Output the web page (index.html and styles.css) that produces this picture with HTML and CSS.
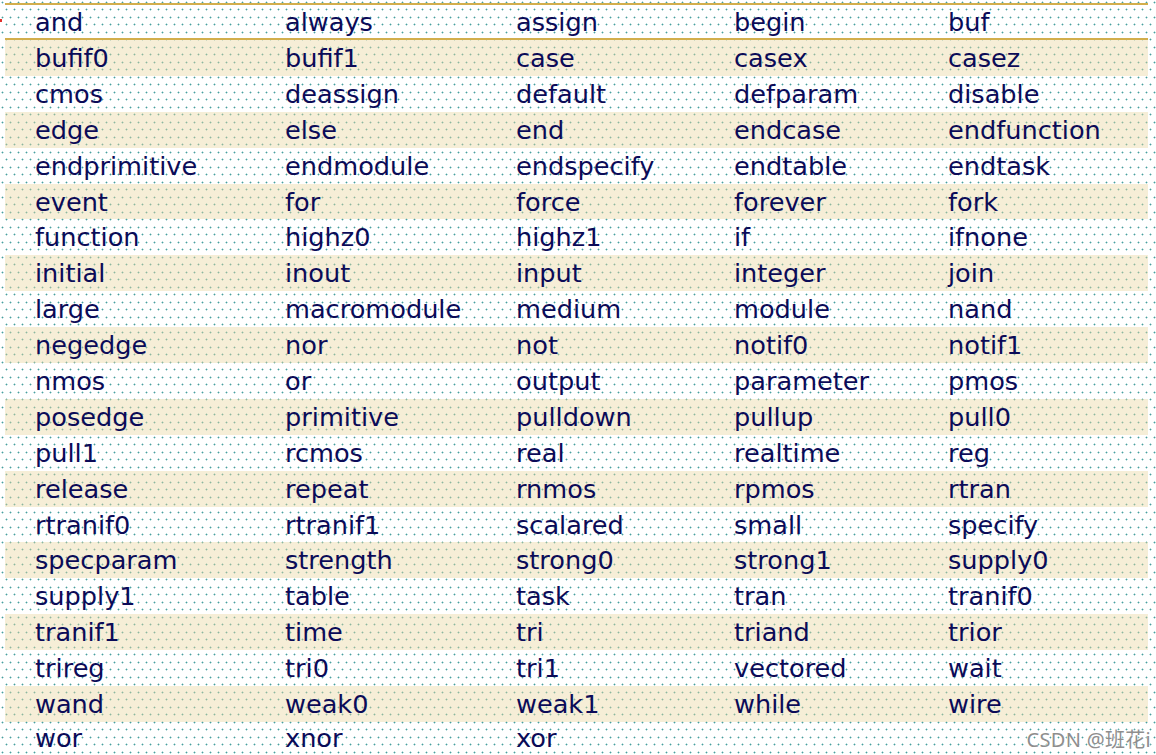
FILE: index.html
```html
<!DOCTYPE html>
<html lang="en">
<head>
<meta charset="utf-8">
<title>Verilog keywords</title>
<link rel="stylesheet" href="styles.css">
</head>
<body>
<div class="page">
  <span class="mark"></span>
  <table class="kw">
    <tbody>
      <tr class="head"><td>and</td><td>always</td><td>assign</td><td>begin</td><td>buf</td></tr>
      <tr><td>bufif0</td><td>bufif1</td><td>case</td><td>casex</td><td>casez</td></tr>
      <tr><td>cmos</td><td>deassign</td><td>default</td><td>defparam</td><td>disable</td></tr>
      <tr><td>edge</td><td>else</td><td>end</td><td>endcase</td><td>endfunction</td></tr>
      <tr><td>endprimitive</td><td>endmodule</td><td>endspecify</td><td>endtable</td><td>endtask</td></tr>
      <tr><td>event</td><td>for</td><td>force</td><td>forever</td><td>fork</td></tr>
      <tr><td>function</td><td>highz0</td><td>highz1</td><td>if</td><td>ifnone</td></tr>
      <tr><td>initial</td><td>inout</td><td>input</td><td>integer</td><td>join</td></tr>
      <tr><td>large</td><td>macromodule</td><td>medium</td><td>module</td><td>nand</td></tr>
      <tr><td>negedge</td><td>nor</td><td>not</td><td>notif0</td><td>notif1</td></tr>
      <tr><td>nmos</td><td>or</td><td>output</td><td>parameter</td><td>pmos</td></tr>
      <tr><td>posedge</td><td>primitive</td><td>pulldown</td><td>pullup</td><td>pull0</td></tr>
      <tr><td>pull1</td><td>rcmos</td><td>real</td><td>realtime</td><td>reg</td></tr>
      <tr><td>release</td><td>repeat</td><td>rnmos</td><td>rpmos</td><td>rtran</td></tr>
      <tr><td>rtranif0</td><td>rtranif1</td><td>scalared</td><td>small</td><td>specify</td></tr>
      <tr><td>specparam</td><td>strength</td><td>strong0</td><td>strong1</td><td>supply0</td></tr>
      <tr><td>supply1</td><td>table</td><td>task</td><td>tran</td><td>tranif0</td></tr>
      <tr><td>tranif1</td><td>time</td><td>tri</td><td>triand</td><td>trior</td></tr>
      <tr><td>trireg</td><td>tri0</td><td>tri1</td><td>vectored</td><td>wait</td></tr>
      <tr><td>wand</td><td>weak0</td><td>weak1</td><td>while</td><td>wire</td></tr>
      <tr class="last"><td>wor</td><td>xnor</td><td>xor</td><td></td><td></td></tr>
    </tbody>
  </table>
  <div class="watermark">CSDN @班花i</div>
</div>
</body>
</html>
```

FILE: styles.css
```css
html, body {
  margin: 0;
  padding: 0;
}

body {
  width: 1156px;
  height: 755px;
  overflow: hidden;
  background-color: #ffffff;
  background-image:
    radial-gradient(circle at 2.5px 2.5px, #47a09f 0.75px, rgba(255, 255, 255, 0) 1.15px),
    radial-gradient(circle at 6.5px 9.5px, #47a09f 0.75px, rgba(255, 255, 255, 0) 1.15px);
  background-size: 8px 15px;
  font-family: "DejaVu Sans", Verdana, sans-serif;
}

.page {
  position: relative;
  height: 755px;
  padding: 3px 8px 0 5px;
  box-sizing: border-box;
}

.mark {
  position: absolute;
  left: 0;
  top: 19px;
  width: 2px;
  height: 3px;
  background: #e0302a;
}

.kw {
  width: 1143px;
  border-collapse: collapse;
  table-layout: fixed;
  border-top: 2px solid #d2ae4c;
  border-bottom: 2px solid #d2ae4c;
}

.kw td {
  padding: 0 0 0 30px;
  height: 35.9px;
  font-size: 25.6px;
  line-height: 30px;
  color: #0b0b58;
  white-space: nowrap;
  vertical-align: middle;
}

.kw td:nth-child(1) { width: 220px; }
.kw td:nth-child(2) { width: 201px; }
.kw td:nth-child(3) { width: 188px; }
.kw td:nth-child(4) { width: 184px; }
.kw td:nth-child(5) { width: 200px; }

.kw tr:nth-child(even) td {
  background-color: rgba(234, 214, 160, 0.42);
}

.kw tr.head td {
  height: 33px;
  border-bottom: 2px solid #d2ae4c;
}

.kw tr.last td {
  height: 28px;
  padding-top: 5px;
  line-height: 23px;
  vertical-align: top;
}

.watermark {
  position: absolute;
  right: 5px;
  bottom: 2px;
  font-family: "Noto Sans", "Noto Sans CJK SC", sans-serif;
  font-size: 20px;
  color: #8e8e8e;
  text-shadow: 0 0 2px #ffffff, 0 0 2px #ffffff;
  letter-spacing: 0.3px;
}
```
